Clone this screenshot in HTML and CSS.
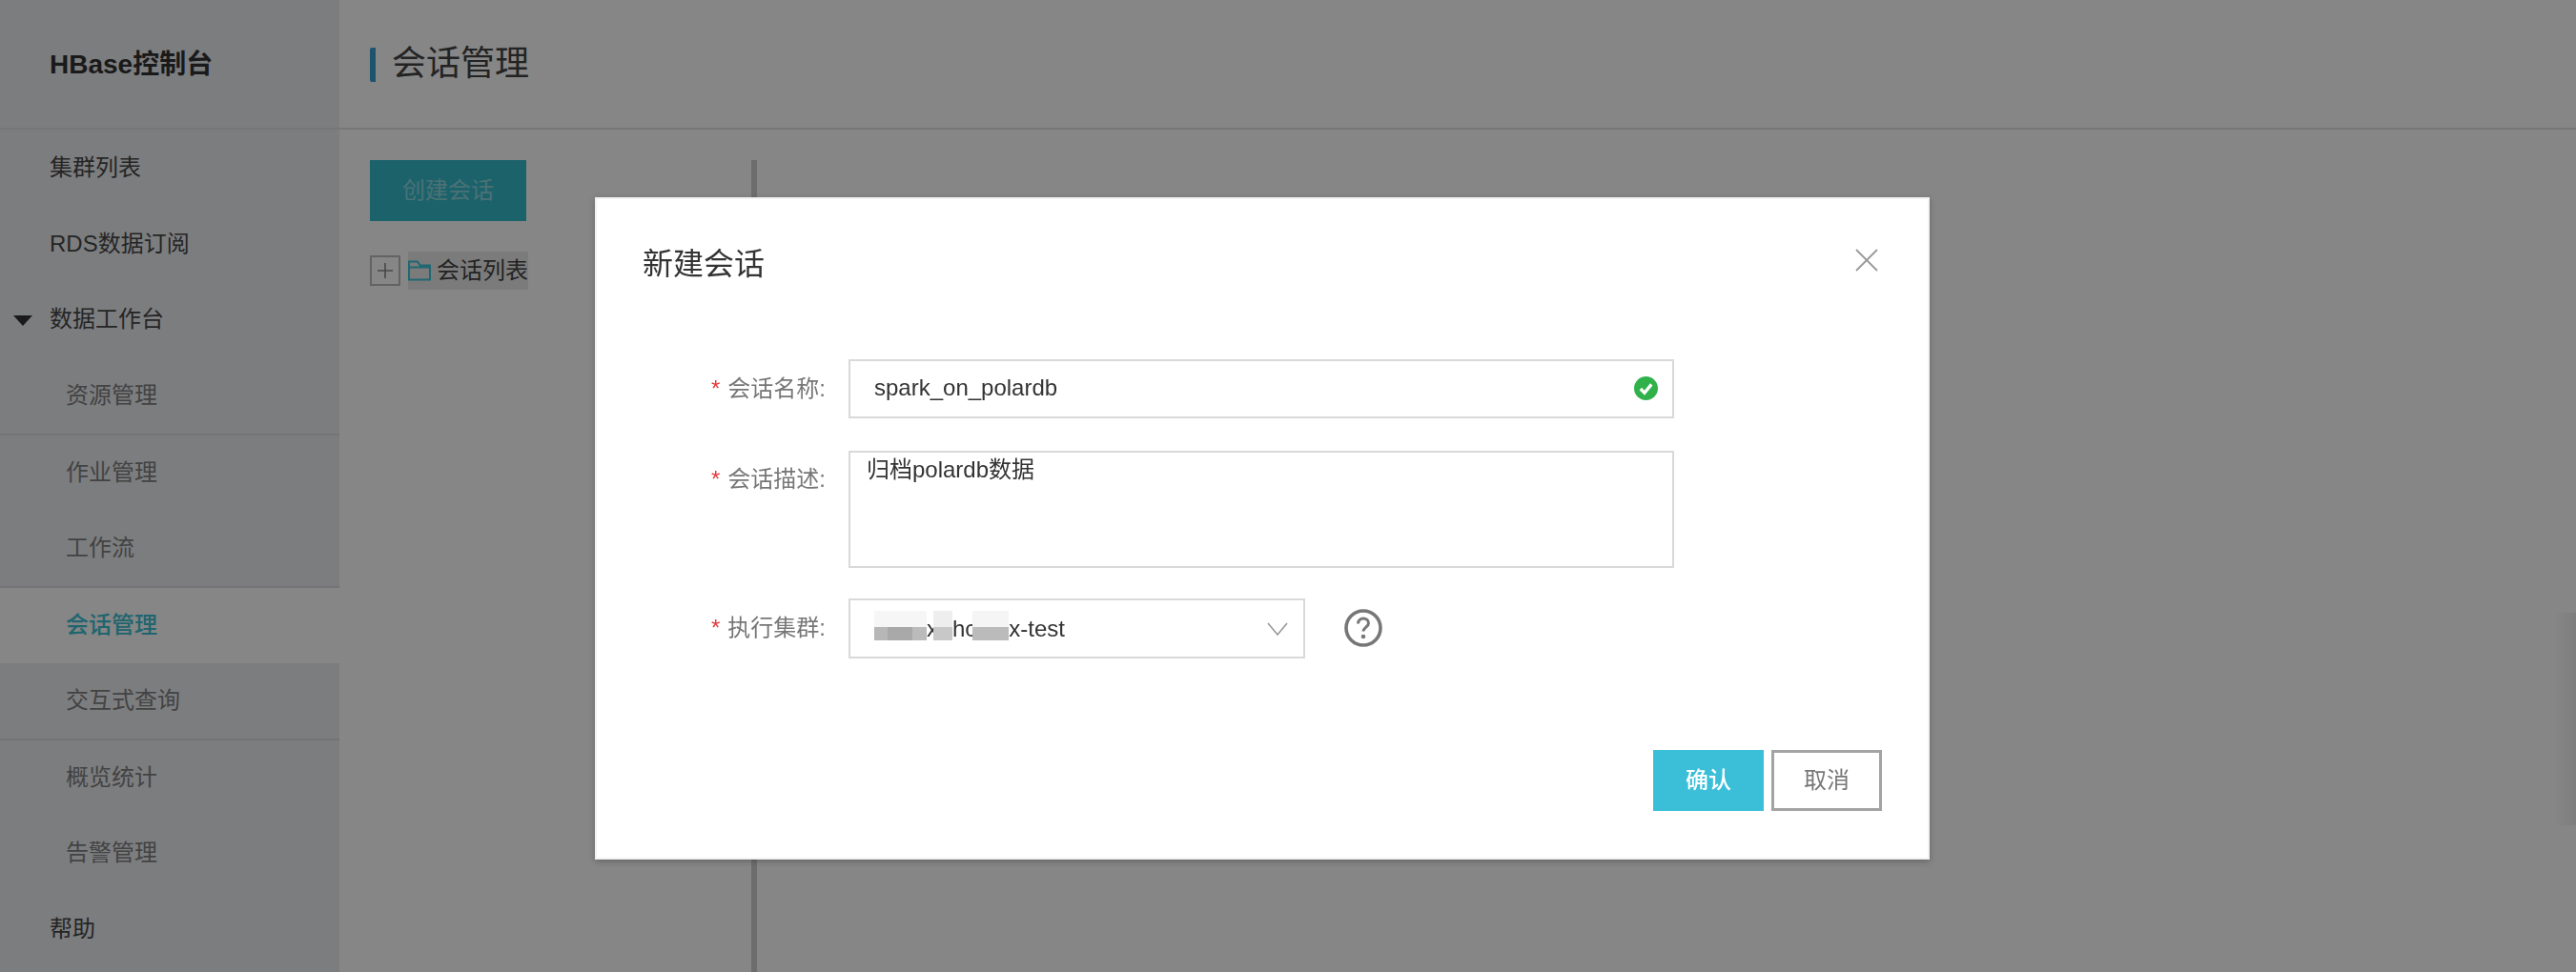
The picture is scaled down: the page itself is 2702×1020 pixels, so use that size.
FILE: index.html
```html
<!DOCTYPE html>
<html lang="zh-CN">
<head>
<meta charset="utf-8">
<title>会话管理</title>
<link rel="stylesheet" href="styles.css">
</head>
<body>
<div class="app">
  <aside class="sidebar">
    <div class="logo">HBase控制台</div>
    <nav class="nav">
      <a class="nav-item">集群列表</a>
      <a class="nav-item">RDS数据订阅</a>
      <a class="nav-item nav-parent"><span class="caret"></span>数据工作台</a>
      <div class="nav-group">
        <a class="nav-item nav-sub">资源管理</a>
      </div>
      <div class="nav-group">
        <a class="nav-item nav-sub">作业管理</a>
        <a class="nav-item nav-sub">工作流</a>
      </div>
      <div class="nav-group nav-group-active">
        <a class="nav-item nav-sub nav-active">会话管理</a>
        <a class="nav-item nav-sub">交互式查询</a>
      </div>
      <div class="nav-group nav-group-last">
        <a class="nav-item nav-sub">概览统计</a>
        <a class="nav-item nav-sub">告警管理</a>
      </div>
      <a class="nav-item">帮助</a>
    </nav>
  </aside>
  <main class="main">
    <header class="page-head"><h1 class="page-title">会话管理</h1></header>
    <div class="content">
      <section class="tree-panel">
        <button class="btn-create" type="button">创建会话</button>
        <div class="tree-row">
          <span class="tree-toggle"><svg width="18" height="18" viewBox="0 0 18 18"><path d="M9 1v16M1 9h16" stroke="#888" stroke-width="1.6" fill="none"/></svg></span>
          <span class="tree-label">
            <svg class="folder" width="24" height="22" viewBox="0 0 24 22"><path d="M1 20.5V1.5h9l2.5 4H23v15zM1 7.5h22" fill="none" stroke="#3bc6d9" stroke-width="2"/></svg>
            会话列表
          </span>
        </div>
      </section>
      <div class="splitter"></div>
    </div>
  </main>
</div>

<div class="mask"><div class="edge-shade"></div></div>

<div class="dialog">
  <div class="dialog-head">
    <h2 class="dialog-title">新建会话</h2>
    <svg class="dialog-close" width="24" height="24" viewBox="0 0 24 24"><path d="M1 1l22 22M23 1L1 23" stroke="#999" stroke-width="1.8" fill="none"/></svg>
  </div>
  <form class="form">
    <div class="form-row form-row-name">
      <label class="form-label"><span class="req">*</span>会话名称:</label>
      <div class="field field-input">
        <span class="field-text">spark_on_polardb</span>
        <svg class="ok-icon" width="25" height="25" viewBox="0 0 24 24"><circle cx="12" cy="12" r="12" fill="#30b14a"/><path d="M6.5 12.500l4 4 7-8.500" stroke="#fff" stroke-width="3.200" fill="none"/></svg>
      </div>
    </div>
    <div class="form-row form-row-desc">
      <label class="form-label"><span class="req">*</span>会话描述:</label>
      <div class="field field-area">归档polardb数据</div>
    </div>
    <div class="form-row form-row-cluster">
      <label class="form-label"><span class="req">*</span>执行集群:</label>
      <div class="field field-select">
        <span class="select-value"><span class="mosaic mosaic-a"></span>x<span class="mosaic mosaic-b"></span>hc<span class="mosaic mosaic-c"></span>x-test</span>
        <svg class="chevron" width="22" height="14" viewBox="0 0 22 14"><path d="M1 1l10 12L21 1" stroke="#999" stroke-width="1.6" fill="none"/></svg>
      </div>
      <svg class="help-icon" width="40" height="40" viewBox="0 0 40 40"><circle cx="20" cy="20" r="18" fill="none" stroke="#777" stroke-width="3.6"/><path d="M14.500 15.500c0-3.200 2.400-5.500 5.500-5.500s5.500 2.200 5.500 5c0 4-5.500 4.200-5.500 8.500" fill="none" stroke="#777" stroke-width="3"/><circle cx="20" cy="29" r="2.300" fill="#777"/></svg>
    </div>
  </form>
  <div class="dialog-foot">
    <button class="btn btn-ok" type="button">确认</button>
    <button class="btn btn-cancel" type="button">取消</button>
  </div>
</div>
</body>
</html>
```
FILE: styles.css
```css
* { box-sizing: border-box; }
html, body { margin: 0; padding: 0; height: 1020px; overflow: hidden; background: #fff; }
body { font-family: "Liberation Sans", "Noto Sans CJK SC", sans-serif; font-size: 24px; color: #333; }

.app { display: flex; height: 1020px; }

.sidebar { width: 356px; flex: none; background: #eceef2; }
.logo { height: 134px; padding: 0 0 5px 52px; display: flex; align-items: center; font-size: 28px; font-weight: 700; color: #333; }
.nav { border-top: 2px solid #e0e0e0; }
.nav-item { display: flex; align-items: center; height: 80px; padding-left: 52px; padding-bottom: 6px; color: #484848; }
.nav-parent { padding-left: 14px; padding-bottom: 8px; }
.caret { width: 0; height: 0; margin-right: 18px; margin-top: 8px; border-left: 10px solid transparent; border-right: 10px solid transparent; border-top: 11px solid #333; }
.nav-sub { padding-left: 69px; color: #808080; }
.nav-group { border-bottom: 2px solid #dcdde0; }
.nav-group-last { border-bottom: 0; }
.nav-group .nav-item { height: 79px; }
.nav-active { background: #fff; color: #3bc0d2; font-weight: 500; }

.main { flex: 1; display: flex; flex-direction: column; min-width: 0; }
.page-head { height: 136px; border-bottom: 2px solid #e0e0e0; padding: 50px 0 0 388px; margin-left: -356px; }
.page-title { margin: 0; height: 36px; padding-left: 17px; border-left: 6px solid #3a9fd0; font-size: 36px; font-weight: 400; line-height: 33px; color: #444; border-radius: 2px; }
.content { flex: 1; display: flex; padding: 32px 0 0 32px; }
.tree-panel { width: 400px; flex: none; }
.btn-create { display: block; width: 164px; height: 64px; border: 0; padding: 0 0 5px; background: #36bacb; color: rgba(255, 255, 255, .45); font: inherit; }
.tree-row { display: flex; align-items: center; margin-top: 32px; height: 40px; }
.tree-toggle { width: 32px; height: 32px; display: flex; align-items: center; justify-content: center; border: 2px solid #bdbdbd; }
.tree-label { display: flex; align-items: center; gap: 6px; height: 40px; margin-left: 8px; background: #ebebeb; color: #444; white-space: nowrap; padding-bottom: 5px; }
.folder { margin-top: 5px; }
.splitter { width: 6px; background: #d0d0d0; }

.mask { position: fixed; inset: 0; background: rgba(0, 0, 0, .475); }
.edge-shade { position: absolute; right: 0; top: 643px; width: 24px; height: 223px; background: linear-gradient(to right, rgba(0, 0, 0, 0), rgba(0, 0, 0, .06)); }

.dialog { position: absolute; left: 624px; top: 207px; width: 1400px; height: 695px; background: #fff; border: 2px solid #f2f2f2; box-shadow: 0 2px 6px rgba(0, 0, 0, .25); display: flex; flex-direction: column; }
.dialog-head { display: flex; justify-content: space-between; align-items: center; height: 92px; padding: 37px 52px 0 48px; flex: none; }
.dialog-title { margin: 0; font-size: 32px; font-weight: 400; color: #333; }
.dialog-close { display: block; margin-top: -1px; }

.form { padding-top: 76px; flex: 1; }
.form-row { display: flex; align-items: flex-start; }
.form-row-desc { margin-top: 34px; }
.form-row-cluster { margin-top: 32px; }
.form-label { width: 264px; flex: none; padding: 14px 24px 0 0; text-align: right; color: #777; white-space: nowrap; line-height: 34px; }
.form-row-desc .form-label { padding-top: 13px; }
.req { color: #e4393c; margin-right: 8px; }
.field { border: 2px solid #d9d9d9; color: #333; }
.field-input { width: 866px; height: 62px; display: flex; align-items: center; justify-content: space-between; padding: 0 15px 2px 25px; }
.field-area { width: 866px; height: 123px; padding: 1px 17px; line-height: 34px; }
.field-select { width: 479px; height: 63px; display: flex; align-items: center; justify-content: space-between; padding: 0 16px 0 25px; }
.select-value { display: flex; align-items: center; white-space: nowrap; }
.mosaic { display: block; height: 31px; margin-top: -6px; }
.mosaic-a { width: 55px; background: linear-gradient(#f6f6f6, #f6f6f6) top / 100% 17px no-repeat, linear-gradient(to right, #b7b7b7 0 14px, #a9a9a9 14px 40px, #bbbbbb 40px); }
.mosaic-b { width: 20px; margin-left: -5px; background: linear-gradient(to bottom, #eeeeee 0 17px, #c8c8c8 17px); }
.mosaic-c { width: 38px; margin-left: -4px; background: linear-gradient(to bottom, #f5f5f5 0 17px, #bbbbbb 17px); }
.chevron { display: block; }
.help-icon { display: block; margin: 11px 0 0 41px; }

.dialog-foot { display: flex; justify-content: flex-end; gap: 8px; padding: 0 48px 49px 0; flex: none; }
.btn { width: 116px; height: 64px; font: inherit; padding: 0 0 5px; }
.btn-ok { border: 0; background: #3bbfd9; color: #fff; font-weight: 500; }
.btn-cancel { background: #fff; border: 3px solid #a3a3a3; color: #777; }
```
